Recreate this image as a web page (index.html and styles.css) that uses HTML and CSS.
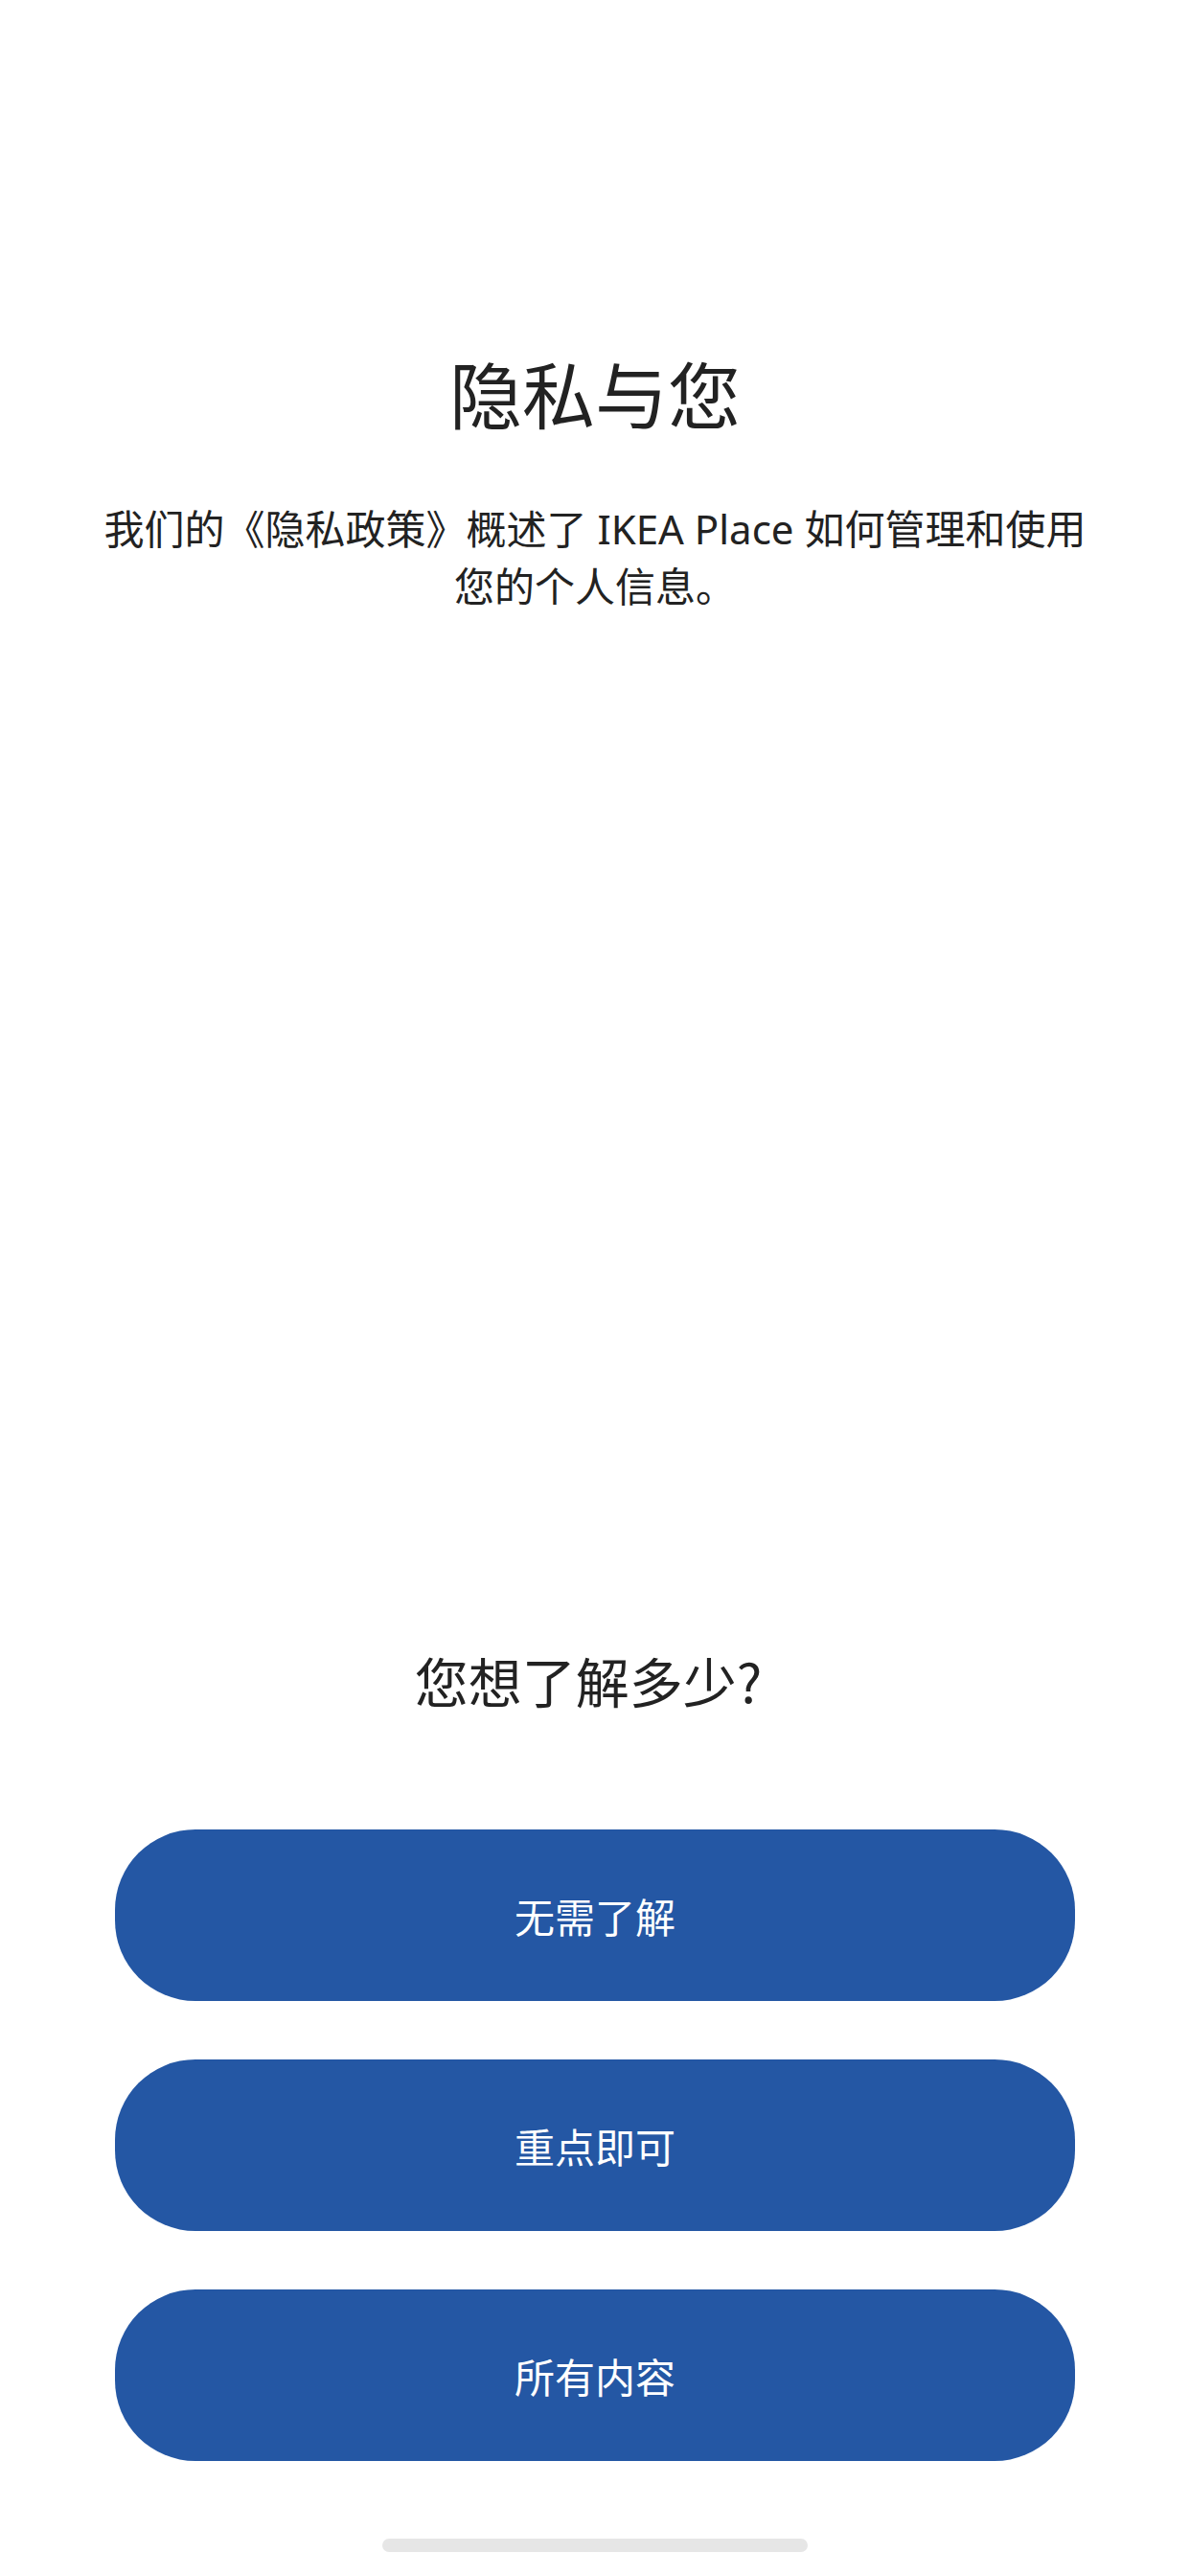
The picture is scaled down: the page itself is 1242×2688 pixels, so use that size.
FILE: index.html
```html
<!DOCTYPE html>
<html lang="zh-CN">

<head>
    <meta charset="UTF-8" />
    <meta name="viewport" content="width=device-width, initial-scale=1.0" />
    <title>隐私与您</title>
    <link rel="stylesheet" href="styles.css">
</head>

<body>
    <div class="screen">
        <div class="intro">
            <h1>隐私与您</h1>
            <p>我们的《隐私政策》概述了 IKEA Place 如何管理和使用您的个人信息。</p>
        </div>

        <h2 class="question">您想了解多少?</h2>

        <div class="choices">
            <button>无需了解</button>
            <button>重点即可</button>
            <button>所有内容</button>
        </div>

        <div class="home-bar"></div>
    </div>
</body>

</html>
```

FILE: styles.css
```css
body {
    margin: 0;
    padding: 0;
    background: #fff;
    color: #222;
    font-family: "Noto Sans", "Noto Sans CJK SC", sans-serif;
}

.screen {
    min-height: 2688px;
    display: flex;
    flex-direction: column;
}

.intro {
    padding: 363px 100px 0;
    text-align: center;
}

h1 {
    margin: 0;
    font-size: 76px;
    font-weight: 400;
    line-height: 100px;
}

.intro p {
    margin: 59px 0 0;
    font-size: 42px;
    line-height: 60px;
}

.question {
    margin: auto 0 0;
    padding-right: 14px;
    text-align: center;
    font-family: "Noto Sans CJK SC", sans-serif;
    font-size: 56px;
    font-weight: 400;
    line-height: 70px;
}

.choices {
    display: flex;
    flex-direction: column;
    gap: 61px;
    margin: 121px 120px 0;
}

.choices button {
    height: 179px;
    border: none;
    border-radius: 84px;
    background: #2457a4;
    color: #fff;
    font-family: inherit;
    font-size: 42px;
    padding: 0;
}

.home-bar {
    width: 444px;
    height: 14px;
    margin: 81px auto 25px;
    border-radius: 7px;
    background: #e6e6e6;
}
```
